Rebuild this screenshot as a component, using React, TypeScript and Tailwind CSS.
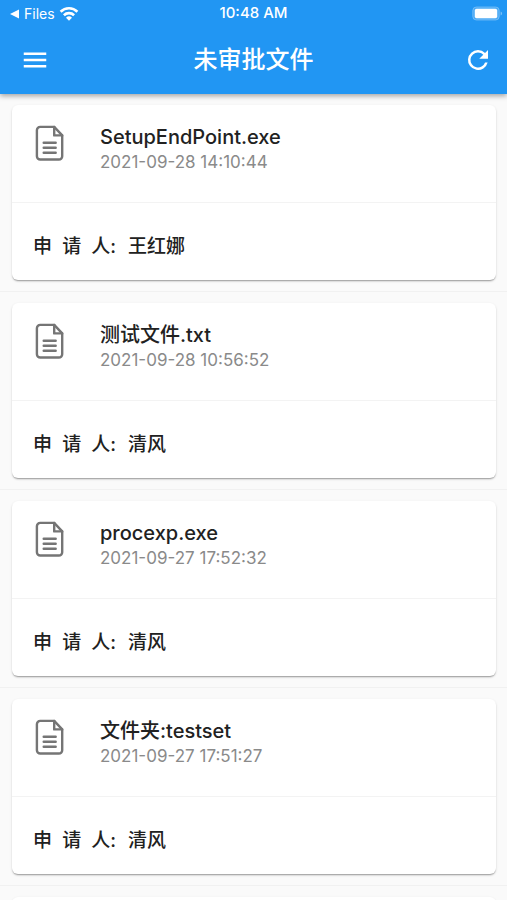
import clsx from 'clsx'

interface FileItem {
  name: string
  time: string
  applicant: string
}

const files: FileItem[] = [
  { name: 'SetupEndPoint.exe', time: '2021-09-28 14:10:44', applicant: '王红娜' },
  { name: '测试文件.txt', time: '2021-09-28 10:56:52', applicant: '清风' },
  { name: 'procexp.exe', time: '2021-09-27 17:52:32', applicant: '清风' },
  { name: '文件夹:testset', time: '2021-09-27 17:51:27', applicant: '清风' },
]

const cardStyle =
  'rounded-md bg-white shadow-[0_2px_2px_-1px_rgba(0,0,0,0.26),0_1px_1px_rgba(0,0,0,0.1),0_1px_3px_rgba(0,0,0,0.1)]'

const WifiIcon = () => (
  <svg className="h-4 w-5" viewBox="0 0 20 16" fill="none" stroke="currentColor" strokeWidth="2.6">
    <path d="M1.6 5.7a12 12 0 0 1 16.8 0" />
    <path d="M4.9 9.2a7.3 7.3 0 0 1 10.2 0" />
    <path d="M10 14.8l-3-3a4.3 4.3 0 0 1 6 0z" fill="currentColor" stroke="none" />
  </svg>
)

const BatteryIcon = () => (
  <svg className="h-4 w-[31px]" viewBox="0 0 31 16">
    <rect x="0.7" y="0.9" width="26.6" height="13.2" rx="3.8" fill="#fff" fillOpacity="0.2" stroke="#fff" strokeOpacity="0.25" />
    <rect x="2.8" y="2.8" width="22.4" height="9.4" rx="1.8" fill="#fff" />
    <path d="M28.6 5.5c2 .8 2 3.2 0 4z" fill="#fff" fillOpacity="0.4" />
  </svg>
)

const FileIcon = () => (
  <svg
    className="h-9 w-[30px] shrink-0 text-[#757575]"
    viewBox="0 0 30 36"
    fill="none"
    stroke="currentColor"
    strokeWidth="2.4"
    strokeLinejoin="round"
    strokeLinecap="round"
  >
    <path d="M19.2 1.9H5.2a3.3 3.3 0 0 0-3.3 3.3v26a3.3 3.3 0 0 0 3.3 3.3h18.7a3.3 3.3 0 0 0 3.3-3.3V10.4z" />
    <path d="M19.2 1.9v8.5h8" />
    <path d="M8.7 17.7h12M8.7 22.7h12M8.7 27.7h12" />
  </svg>
)

const StatusBar = () => (
  <div className="grid h-[27px] grid-cols-3 items-center px-2 text-[15px]">
    <div className="flex items-center gap-1">
      <svg className="h-[10px] w-3" viewBox="0 0 12 10" fill="currentColor">
        <path d="M2 5l9-4.4v8.8z" />
      </svg>
      <span className="text-sm">Files</span>
      <WifiIcon />
    </div>
    <span className="text-center font-medium">10:48 AM</span>
    <div className="-mr-1 flex justify-end">
      <BatteryIcon />
    </div>
  </div>
)

const FileCard = ({ name, time, applicant }: FileItem) => (
  <article className={cardStyle}>
    <div className="flex h-[98px] items-start gap-[35px] border-b border-[#f3f3f3] pt-5 pl-[23px]">
      <FileIcon />
      <div>
        <h2 className="text-xl leading-6 font-medium">{name}</h2>
        <p className="text-[17px] leading-[26px] text-[#8a8a8a]">{time}</p>
      </div>
    </div>
    <p className="flex h-[77px] items-center gap-3 pt-3 pl-[21px] text-[19px] font-medium">
      <span className="whitespace-pre">申  请  人:</span>
      <span>{applicant}</span>
    </p>
  </article>
)

export default function App() {
  return (
    <div className="flex h-screen flex-col overflow-hidden bg-[#fafafa] font-['Inter','Noto_Sans_CJK_SC',sans-serif] text-[#212121]">
      <header className="z-10 bg-[#2196f3] text-white shadow-[0_2px_5px_rgba(0,0,0,0.35)]">
        <StatusBar />
        <div className="flex h-[67px] items-center justify-between pr-3 pb-0.5 pl-[18px]">
          <button type="button" aria-label="Menu" className="flex size-[34px] items-center justify-center">
            <svg className="size-[30px]" viewBox="0 0 24 24" fill="currentColor">
              <path d="M3 18h18v-2H3v2zm0-5h18v-2H3v2zm0-7v2h18V6H3z" />
            </svg>
          </button>
          <h1 className="flex-1 pr-1.5 text-center text-2xl font-medium">未审批文件</h1>
          <button type="button" aria-label="Refresh" className="flex size-[34px] items-center justify-center">
            <svg className="size-[30px]" viewBox="0 0 24 24" fill="currentColor">
              <path d="M17.65 6.35A7.958 7.958 0 0 0 12 4a8 8 0 1 0 7.73 10h-2.08A6 6 0 1 1 12 6c1.66 0 3.14.69 4.22 1.78L13 11h7V4l-2.35 2.35z" />
            </svg>
          </button>
        </div>
      </header>
      <main className="min-h-0 flex-1 overflow-hidden">
        <ul>
          {files.map((file) => (
            <li key={file.time} className="border-b border-[#f1f1f1] py-[11px] pr-[11px] pl-3">
              <FileCard {...file} />
            </li>
          ))}
          <li className="py-[11px] pr-[11px] pl-3">
            <div className={clsx(cardStyle, 'h-[175px]')} />
          </li>
        </ul>
      </main>
    </div>
  )
}
